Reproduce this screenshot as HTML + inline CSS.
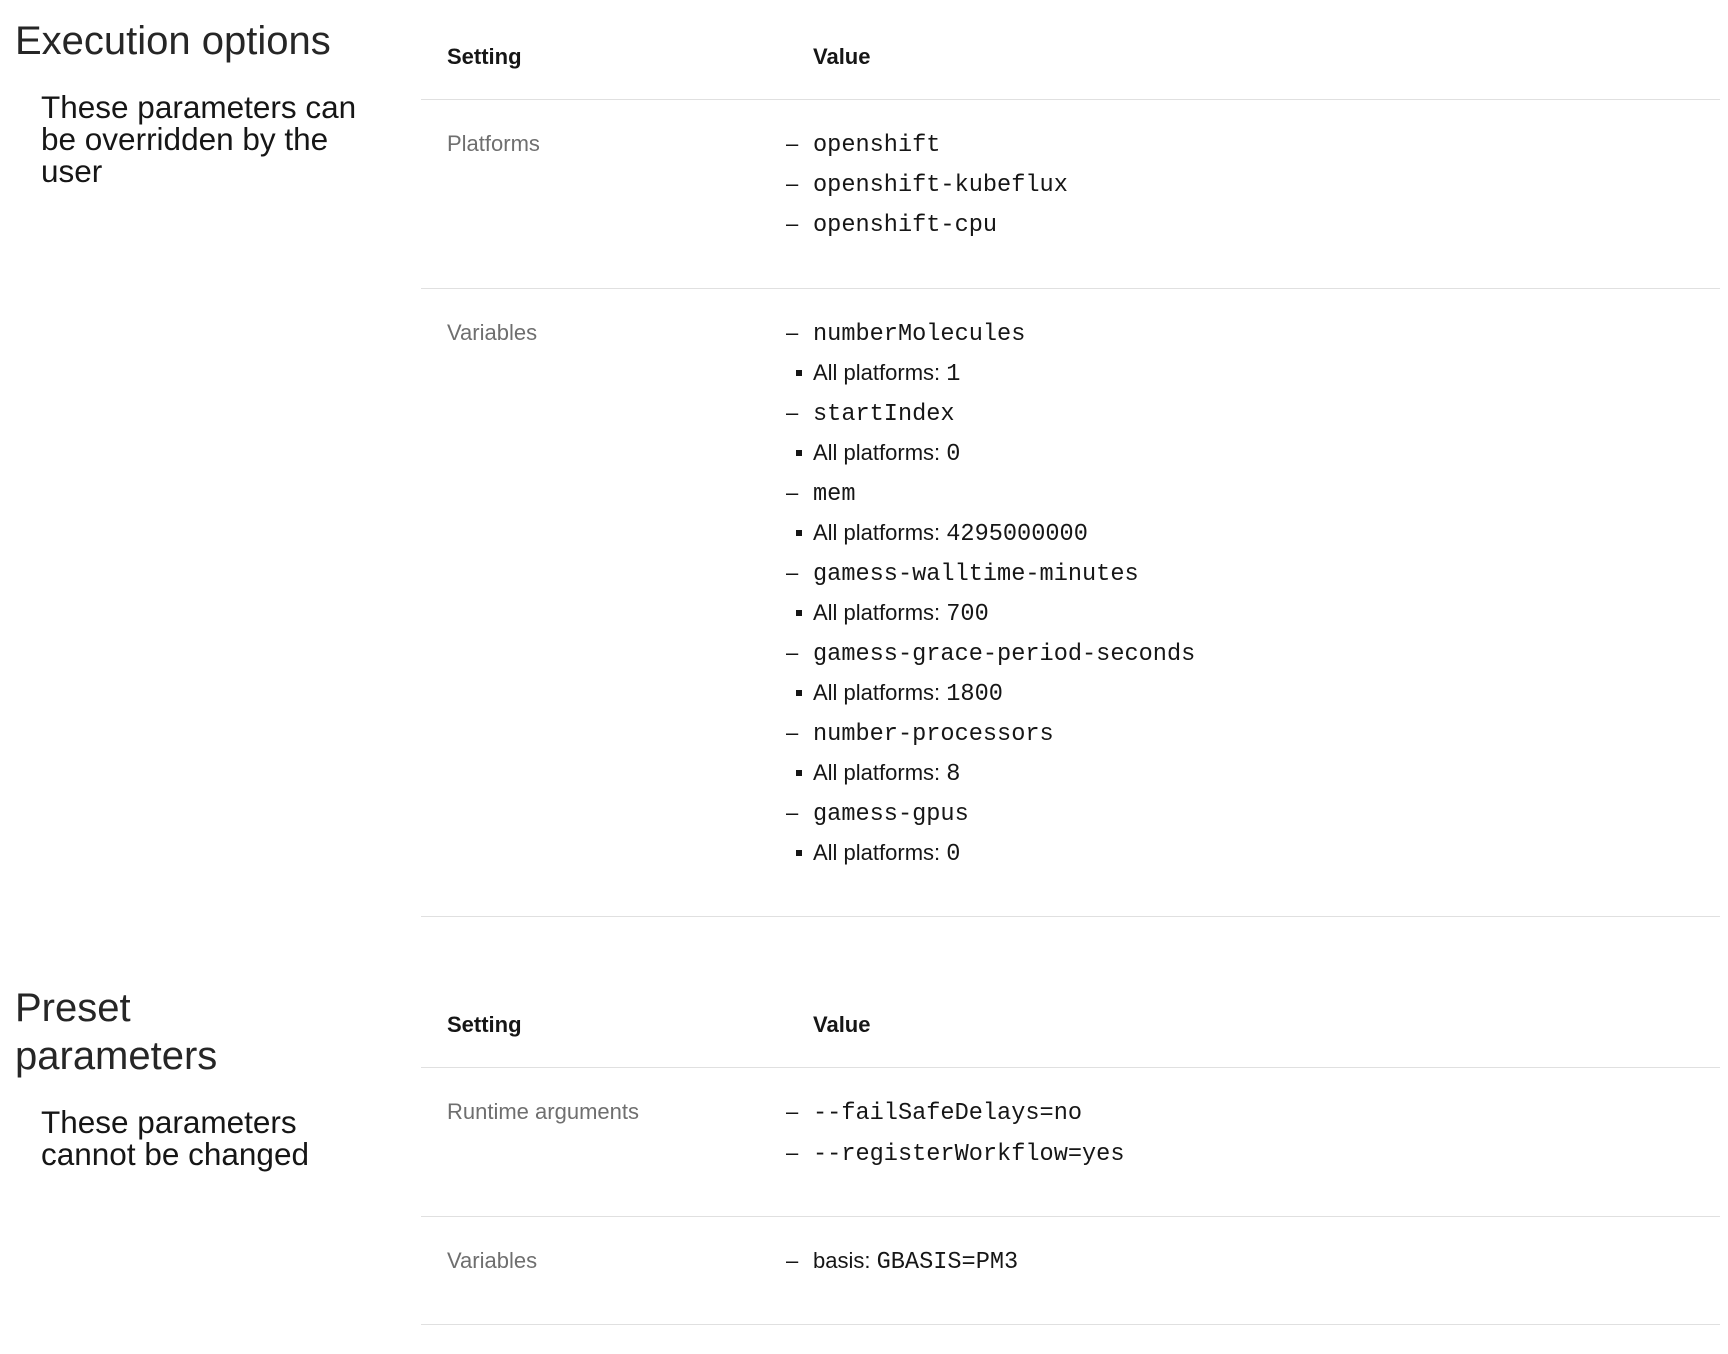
<!DOCTYPE html>
<html><head><style>
body{margin:0;width:1728px;height:1354px;background:#fff;font-family:"Liberation Sans",sans-serif;color:#161616;position:relative;overflow:hidden}
.a{position:absolute;white-space:nowrap}
.h{font-size:40px;font-weight:300;line-height:48px;color:#262626}
.s{font-size:31.5px;line-height:32px}
.th{font-size:22px;font-weight:bold}
.lab{font-size:22px;color:#6f6f6f}
.v{font-size:22px}
.m{font-family:"Liberation Mono",monospace;font-size:23.6px}
div.m{margin-top:1px}
.line{position:absolute;left:421px;width:1299px;height:1px;background:#e0e0e0}
.d{position:absolute;left:786px;font-size:22px}
.b{position:absolute;left:796px;width:6px;height:6px;background:#161616}
</style></head><body>
<div class="a h" style="left:15px;top:17px">Execution options</div>
<div class="a s" style="left:41px;top:91px">These parameters can<br>be overridden by the<br>user</div>
<div class="a th" style="left:447px;top:44px">Setting</div>
<div class="a th" style="left:813px;top:44px">Value</div>
<div class="line" style="top:99px"></div>
<div class="a lab" style="left:447px;top:131px">Platforms</div>
<div class="line" style="top:288px"></div>
<div class="a lab" style="left:447px;top:320px">Variables</div>
<div class="line" style="top:916px"></div>
<div class="a h" style="left:15px;top:984px;white-space:normal;width:300px">Preset<br>parameters</div>
<div class="a s" style="left:41px;top:1106px">These parameters<br>cannot be changed</div>
<div class="a th" style="left:447px;top:1012px">Setting</div>
<div class="a th" style="left:813px;top:1012px">Value</div>
<div class="line" style="top:1067px"></div>
<div class="a lab" style="left:447px;top:1099px">Runtime arguments</div>
<div class="line" style="top:1216px"></div>
<div class="a lab" style="left:447px;top:1248px">Variables</div>
<div class="line" style="top:1324px"></div>

<div class="d" style="top:131px">–</div><div class="a m" style="left:813px;top:131px">openshift</div>
<div class="d" style="top:171px">–</div><div class="a m" style="left:813px;top:171px">openshift-kubeflux</div>
<div class="d" style="top:211px">–</div><div class="a m" style="left:813px;top:211px">openshift-cpu</div>

<div class="d" style="top:320px">–</div><div class="a m" style="left:813px;top:320px">numberMolecules</div>
<div class="b" style="top:370px"></div><div class="a v" style="left:813px;top:360px">All platforms: <span class="m">1</span></div>
<div class="d" style="top:400px">–</div><div class="a m" style="left:813px;top:400px">startIndex</div>
<div class="b" style="top:450px"></div><div class="a v" style="left:813px;top:440px">All platforms: <span class="m">0</span></div>
<div class="d" style="top:480px">–</div><div class="a m" style="left:813px;top:480px">mem</div>
<div class="b" style="top:530px"></div><div class="a v" style="left:813px;top:520px">All platforms: <span class="m">4295000000</span></div>
<div class="d" style="top:560px">–</div><div class="a m" style="left:813px;top:560px">gamess-walltime-minutes</div>
<div class="b" style="top:610px"></div><div class="a v" style="left:813px;top:600px">All platforms: <span class="m">700</span></div>
<div class="d" style="top:640px">–</div><div class="a m" style="left:813px;top:640px">gamess-grace-period-seconds</div>
<div class="b" style="top:690px"></div><div class="a v" style="left:813px;top:680px">All platforms: <span class="m">1800</span></div>
<div class="d" style="top:720px">–</div><div class="a m" style="left:813px;top:720px">number-processors</div>
<div class="b" style="top:770px"></div><div class="a v" style="left:813px;top:760px">All platforms: <span class="m">8</span></div>
<div class="d" style="top:800px">–</div><div class="a m" style="left:813px;top:800px">gamess-gpus</div>
<div class="b" style="top:850px"></div><div class="a v" style="left:813px;top:840px">All platforms: <span class="m">0</span></div>

<div class="d" style="top:1099px">–</div><div class="a m" style="left:813px;top:1099px">--failSafeDelays=no</div>
<div class="d" style="top:1140px">–</div><div class="a m" style="left:813px;top:1140px">--registerWorkflow=yes</div>
<div class="d" style="top:1248px">–</div><div class="a v" style="left:813px;top:1248px">basis: <span class="m">GBASIS=PM3</span></div>
</body></html>
